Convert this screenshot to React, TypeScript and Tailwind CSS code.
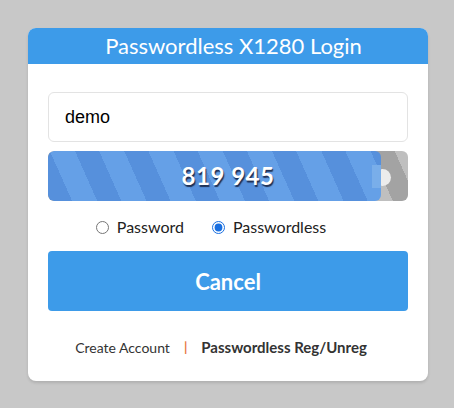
import React from "react";

const stripesBlue =
  "bg-[repeating-linear-gradient(66deg,#5690dc_0px,#5690dc_22px,#65a0e7_22px,#65a0e7_45px)]";

export default function App() {
  return (
    <div className="min-h-screen bg-[#c8c8c8] pt-7 font-['Lato',sans-serif]">
      <div className="ml-[28px] w-[400px] overflow-hidden rounded-lg bg-white shadow-[0_2px_3px_rgba(0,0,0,0.12)]">
        <div className="h-9 bg-[#3d9be9] pl-[11px] text-center text-[22px] leading-9 text-white">
          Passwordless X1280 Login
        </div>

        <div className="px-5 pt-7 pb-[22px]">
          <div className="flex h-[50px] items-center rounded-md border border-[#e3e3e3] px-4 font-['Liberation_Sans',sans-serif] text-[18px] text-black">
            demo
          </div>

          {/* otp progress */}
          <div className="relative mt-[9px] h-[50px] overflow-hidden rounded-md bg-[repeating-linear-gradient(66deg,#a3a3a3_0px,#a3a3a3_22px,#bfbfbf_22px,#bfbfbf_45px)]">
            <div className="absolute left-[326px] top-[18px] h-[17px] w-[17px] rounded-full bg-[#ececec]" />
            <div
              className={`relative flex h-full items-center justify-center rounded-md ${stripesBlue}`}
              style={{ width: `${(333 / 360) * 100}%` }}
            >
              <div className="absolute right-0 top-[14px] h-[23px] w-[9px] bg-[#79aeea]" />
              <span className="pl-[27px] text-[24px] font-bold tracking-[0.5px] text-white [text-shadow:1px_2px_1px_rgba(20,30,60,0.85)]">
                819 945
              </span>
            </div>
          </div>

          <div className="mt-[13px] flex h-[26px] items-center justify-center gap-[28px] pr-[34px] text-[16px] text-[#222]">
            <label className="flex items-center gap-[8px]">
              <input type="radio" name="mode" className="m-0 h-[13px] w-[13px]" />
              Password
            </label>
            <label className="flex items-center gap-[8px]">
              <input
                type="radio"
                name="mode"
                defaultChecked
                className="m-0 h-[13px] w-[13px] accent-[#1a6fe0]"
              />
              Passwordless
            </label>
          </div>

          <button className="mt-[11px] h-[60px] w-full rounded bg-[#3d9be9] text-[22px] font-bold text-white">
            Cancel
          </button>

          <div className="mt-[25px] flex items-center justify-center gap-[14px] pr-[14px] text-[#333]">
            <span className="text-[14px]">Create Account</span>
            <span className="text-[13px] font-bold text-[#e8753f]">|</span>
            <span className="text-[15px] font-bold">Passwordless Reg/Unreg</span>
          </div>
        </div>
      </div>
    </div>
  );
}
